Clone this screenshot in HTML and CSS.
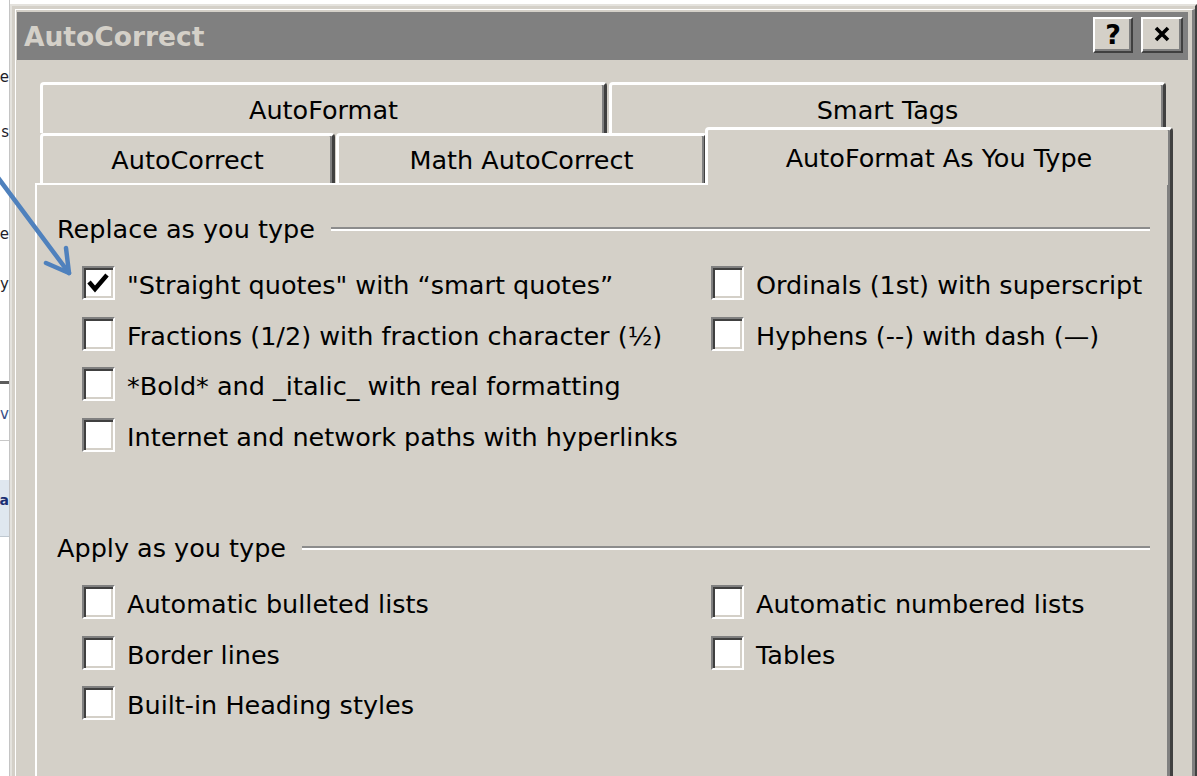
FILE: index.html
```html
<!DOCTYPE html>
<html lang="en">
<head>
<meta charset="utf-8">
<title>AutoCorrect</title>
<link rel="stylesheet" href="styles.css">
</head>
<body>
<div class="desk">
  <!-- sliver of the document window sitting behind the dialog -->
  <div class="behind">
    <div class="bh-text bh-a"><span>e</span></div>
    <div class="bh-text bh-b"><span>s</span></div>
    <div class="bh-text bh-c"><span>e</span></div>
    <div class="bh-text bh-d"><span>y</span></div>
    <div class="bh-rule"></div>
    <div class="bh-text bh-e"><span>v</span></div>
    <div class="bh-sep"></div>
    <div class="bh-band"><span>a</span></div>
  </div>

  <div class="window">
    <div class="window-inner">
      <div class="titlebar">
        <span class="title">AutoCorrect</span>
        <div class="caption-btns">
          <div class="cbtn cbtn-help">?</div>
          <div class="cbtn cbtn-close">
            <svg width="16" height="16" viewBox="0 0 16 16"><path d="M2 2 L14 14 M14 2 L2 14" stroke="#000" stroke-width="3.6" fill="none"/></svg>
          </div>
        </div>
      </div>

      <div class="client">
        <div class="tabs">
          <div class="tab-row tab-row-back">
            <div class="tab tab-autoformat">AutoFormat</div>
            <div class="tab tab-smarttags">Smart Tags</div>
          </div>
          <div class="tab-row tab-row-front">
            <div class="tab tab-autocorrect">AutoCorrect</div>
            <div class="tab tab-math">Math AutoCorrect</div>
            <div class="tab tab-selected">AutoFormat As You Type</div>
          </div>
        </div>

        <div class="panel">
          <div class="group-head">
            <span class="group-label">Replace as you type</span>
            <span class="etched"></span>
          </div>
          <div class="group-body">
            <div class="col col-left">
              <div class="opt"><span class="box"><svg width="29" height="29" viewBox="0 0 29 29"><path d="M5 13 L11 20 L23 6" stroke="#000" stroke-width="4.5" fill="none" stroke-linejoin="miter"/></svg></span><span class="opt-label">"Straight quotes" with “smart quotes”</span></div>
              <div class="opt"><span class="box"></span><span class="opt-label">Fractions (1/2) with fraction character (½)</span></div>
              <div class="opt"><span class="box"></span><span class="opt-label">*Bold* and _italic_ with real formatting</span></div>
              <div class="opt"><span class="box"></span><span class="opt-label">Internet and network paths with hyperlinks</span></div>
            </div>
            <div class="col col-right">
              <div class="opt"><span class="box"></span><span class="opt-label">Ordinals (1st) with superscript</span></div>
              <div class="opt"><span class="box"></span><span class="opt-label">Hyphens (--) with dash (—)</span></div>
            </div>
          </div>

          <div class="group-head group-head-second">
            <span class="group-label">Apply as you type</span>
            <span class="etched"></span>
          </div>
          <div class="group-body">
            <div class="col col-left">
              <div class="opt"><span class="box"></span><span class="opt-label">Automatic bulleted lists</span></div>
              <div class="opt"><span class="box"></span><span class="opt-label">Border lines</span></div>
              <div class="opt"><span class="box"></span><span class="opt-label">Built-in Heading styles</span></div>
            </div>
            <div class="col col-right">
              <div class="opt"><span class="box"></span><span class="opt-label">Automatic numbered lists</span></div>
              <div class="opt"><span class="box"></span><span class="opt-label">Tables</span></div>
            </div>
          </div>
        </div>
      </div>
    </div>
  </div>
</div>

<!-- callout arrow pointing at the first option -->
<svg class="callout" width="100" height="300" viewBox="0 0 100 300">
  <path d="M-4 175 L69 273" stroke="#4f81bd" stroke-width="4.5" fill="none" stroke-linecap="round"/>
  <path d="M66 248 L69 273 L46 263" stroke="#4f81bd" stroke-width="4.5" fill="none" stroke-linecap="round" stroke-linejoin="round"/>
</svg>
</body>
</html>
```

FILE: styles.css
```css
html, body {
  margin: 0;
  padding: 0;
}

body {
  width: 1197px;
  height: 776px;
  overflow: hidden;
  background: #ffffff;
  font-family: "DejaVu Sans", sans-serif;
  position: relative;
}

.desk {
  display: flex;
  height: 776px;
  overflow: hidden;
}

/* ---- document window behind the dialog ---- */
.behind {
  width: 9px;
  flex: none;
  border-right: 1px solid #c4c4c4;
  background: #ffffff;
  display: flex;
  flex-direction: column;
}

.bh-text {
  display: flex;
  justify-content: flex-end;
  white-space: nowrap;
  height: 26px;
  line-height: 26px;
  font-size: 15px;
  color: #1e1e2a;
}

.bh-a { margin-top: 64px; }
.bh-b { margin-top: 29px; }
.bh-c { margin-top: 76px; }
.bh-d { margin-top: 24px; }

.bh-rule {
  margin-top: 84px;
  height: 3px;
  background: #5c5c5c;
}

.bh-e {
  margin-top: 17px;
  color: #3a4f86;
}

.bh-sep {
  margin-top: 13px;
  height: 1px;
  background: #c8c8c8;
}

.bh-band {
  margin-top: 39px;
  height: 56px;
  background: #dfe7ef;
  border-bottom: 1px solid #bfc8d0;
  display: flex;
  justify-content: flex-end;
  white-space: nowrap;
  font-size: 14px;
  font-weight: bold;
  line-height: 40px;
  color: #1b2f73;
}

/* ---- dialog frame ---- */
.window {
  flex: 1;
  margin-top: 4px;
  background: #d4d0c8;
  border-top: 2px solid #e4e2dd;
  border-left: 2px solid #e4e2dd;
  border-right: 2px solid #404040;
  padding: 3px 0 0 3px;
}

.window-inner {
  height: 100%;
  border-top: 1px solid #ffffff;
  border-left: 1px solid #ffffff;
  border-right: 3px solid #808080;
  padding: 2px 4px 0 1px;
}

.titlebar {
  height: 48px;
  background: #808080;
  display: flex;
  align-items: flex-start;
  padding-left: 7px;
}

.title {
  font-weight: bold;
  font-size: 26.5px;
  line-height: 50px;
  color: #d4d0c8;
}

.caption-btns {
  margin-left: auto;
  margin-top: 5px;
  margin-right: 5px;
  display: flex;
  gap: 8px;
}

.cbtn {
  box-sizing: border-box;
  height: 36px;
  background: #d4d0c8;
  border: 2px solid;
  border-color: #ffffff #404040 #404040 #ffffff;
  box-shadow: inset -2px -2px 0 #808080;
  display: flex;
  align-items: center;
  justify-content: center;
}

.cbtn-help {
  width: 40px;
  font-weight: bold;
  font-size: 27px;
  line-height: 1;
  color: #000;
  padding-bottom: 2px;
}

.cbtn-close {
  width: 42px;
  padding-bottom: 2px;
}

/* ---- tab strip ---- */
.client {
  padding-top: 22px;
}

.tabs {
  margin-left: 23px;
  font-size: 25.5px;
  color: #000;
}

.tab-row {
  display: flex;
}

.tab-row-back {
  height: 45px;
  gap: 2px;
  align-items: flex-start;
}

.tab-row-front {
  height: 56px;
  align-items: flex-end;
  gap: 1px;
}

.tab {
  box-sizing: border-box;
  flex: none;
  background: #d4d0c8;
  border-top: 3px solid #ffffff;
  border-left: 3px solid #ffffff;
  border-right: 3px solid #404040;
  border-top-left-radius: 4px;
  border-top-right-radius: 4px;
  box-shadow: inset -2px 0 0 #808080;
  display: flex;
  align-items: center;
  justify-content: center;
  white-space: nowrap;
}

.tab-row-back .tab {
  height: 51px;
  padding-top: 2px;
}

.tab-autoformat { width: 567px; }
.tab-smarttags { width: 557px; }

.tab-row-front .tab {
  height: 50px;
  padding-top: 1px;
}

.tab-autocorrect { width: 295px; }
.tab-math { width: 371px; }

.tab-selected {
  position: relative;
  z-index: 1;
  width: 468px;
  margin-left: -3px;
  margin-bottom: -2px;
  padding-bottom: 1px;
}

.tab-row-front .tab-selected {
  height: 58px;
}

/* ---- page body ---- */
.panel {
  margin-left: 18px;
  margin-right: 15px;
  height: 640px;
  background: #d4d0c8;
  border-top: 2px solid #ffffff;
  border-left: 2px solid #ffffff;
  border-right: 3px solid #404040;
  box-shadow: inset -3px 0 0 #808080;
  padding: 19px 20px 0 20px;
  font-size: 25.5px;
  color: #000;
}

.group-head {
  height: 50px;
  display: flex;
  align-items: center;
}

.group-head-second {
  margin-top: 61px;
}

.group-label {
  white-space: nowrap;
}

.etched {
  flex: 1;
  margin-left: 16px;
  margin-right: 0;
  height: 0;
  border-top: 2px solid #8c8c8c;
  border-bottom: 2px solid #ffffff;
}

.group-body {
  display: flex;
  margin-top: 6px;
  padding-left: 26px;
}

.col-left {
  width: 629px;
}

.opt {
  height: 50.5px;
  display: flex;
  align-items: center;
  white-space: nowrap;
}

.box {
  box-sizing: border-box;
  flex: none;
  width: 33px;
  height: 34px;
  margin-top: -4px;
  margin-left: -1px;
  background: #ffffff;
  border: 2px solid;
  border-color: #808080 #ffffff #ffffff #808080;
  box-shadow: inset 2px 2px 0 #404040, inset -2px -2px 0 #d4d0c8;
  display: flex;
  align-items: center;
  justify-content: center;
}

.opt-label {
  margin-left: 12px;
}

/* ---- annotation ---- */
.callout {
  position: absolute;
  left: 0;
  top: 0;
  pointer-events: none;
}
```
